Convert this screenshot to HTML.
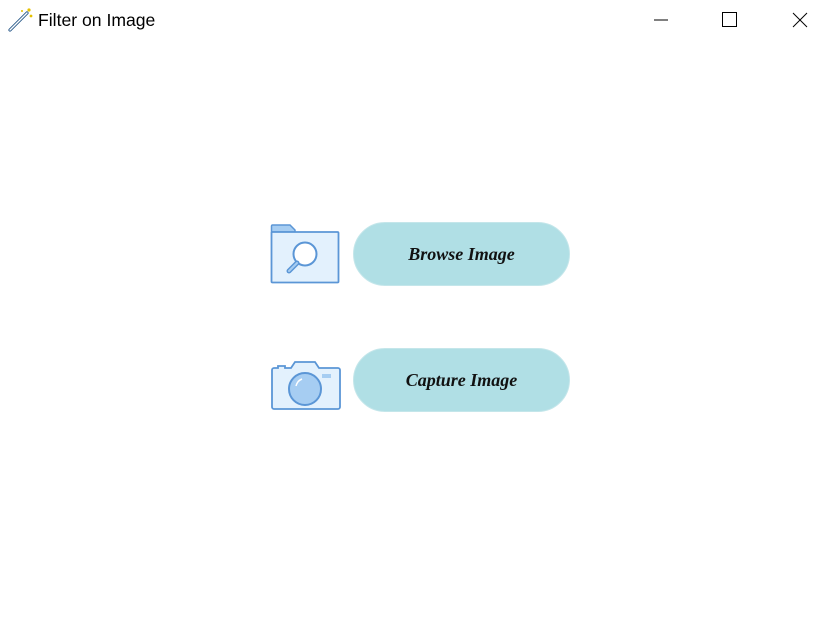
<!DOCTYPE html>
<html><head><meta charset="utf-8"><style>
body{margin:0;width:832px;height:624px;background:#fff;position:relative;overflow:hidden;font-family:"Liberation Sans",sans-serif}
.title{position:absolute;left:38px;top:10px;font-size:17.6px;color:#000}
.btn{position:absolute;left:353px;width:217px;height:64px;border-radius:32px;background:#b0dfe5;border:1px solid #c4e6ea;box-sizing:border-box;text-align:center;line-height:62px;font-family:"Liberation Serif",serif;font-style:italic;font-weight:bold;font-size:18px;color:#111}
svg{position:absolute}
</style></head><body>
<svg style="left:7px;top:7px" width="26" height="26" viewBox="0 0 26 26">
<line x1="3" y1="23" x2="20" y2="6" stroke="#2a5a8a" stroke-width="3.2" stroke-linecap="round"/>
<line x1="3" y1="23" x2="20" y2="6" stroke="#fff" stroke-width="1.4" stroke-linecap="round"/>
<circle cx="22" cy="3" r="1.6" fill="#e5c100"/><circle cx="24" cy="9" r="1.4" fill="#e5c100"/><circle cx="15" cy="4" r="1" fill="#e5c100"/>
</svg>
<div class="title">Filter on Image</div>
<svg style="left:650px;top:10px" width="170" height="20">
<line x1="4" y1="10" x2="18" y2="10" stroke="#000" stroke-width="1"/>
<rect x="72.5" y="2.5" width="14" height="14" fill="none" stroke="#000" stroke-width="1"/>
<line x1="143" y1="3" x2="157" y2="17" stroke="#000"/><line x1="157" y1="3" x2="143" y2="17" stroke="#000"/>
</svg>
<svg style="left:270px;top:224px" width="72" height="62" viewBox="0 0 72 62">
<path d="M1.5 8 V2 a1 1 0 0 1 1-1 H20 l5 5 V8 Z" fill="#a6cdf2" stroke="#5b96d6" stroke-width="1.5"/>
<rect x="1.5" y="8" width="67" height="50.5" fill="#e3f1fd" stroke="#5b96d6" stroke-width="1.8" rx="1"/>
<circle cx="35" cy="30" r="11.5" fill="#fff" stroke="#5b96d6" stroke-width="2"/>
<line x1="27" y1="39" x2="19" y2="47" stroke="#5b96d6" stroke-width="5" stroke-linecap="round"/>
<line x1="27" y1="39" x2="19" y2="47" stroke="#a6cdf2" stroke-width="2" stroke-linecap="round"/>
</svg>
<div class="btn" style="top:222px">Browse Image</div>
<svg style="left:270px;top:360px" width="72" height="52" viewBox="0 0 72 52">
<path d="M4 8 h4 v-2 h7 v2 h6 l4 -6 h20 l4 6 h19 a2 2 0 0 1 2 2 v37 a2 2 0 0 1-2 2 h-64 a2 2 0 0 1-2-2 v-37 a2 2 0 0 1 2-2 Z" fill="#e3f1fd" stroke="#5b96d6" stroke-width="1.8"/>
<circle cx="35" cy="29" r="16" fill="#a6cdf2" stroke="#5b96d6" stroke-width="2"/>
<path d="M26 26 a10 10 0 0 1 6-7" stroke="#fff" stroke-width="1.5" fill="none"/>
<rect x="52" y="14" width="9" height="4" fill="#a6cdf2"/>
</svg>
<div class="btn" style="top:348px">Capture Image</div>
</body></html>
